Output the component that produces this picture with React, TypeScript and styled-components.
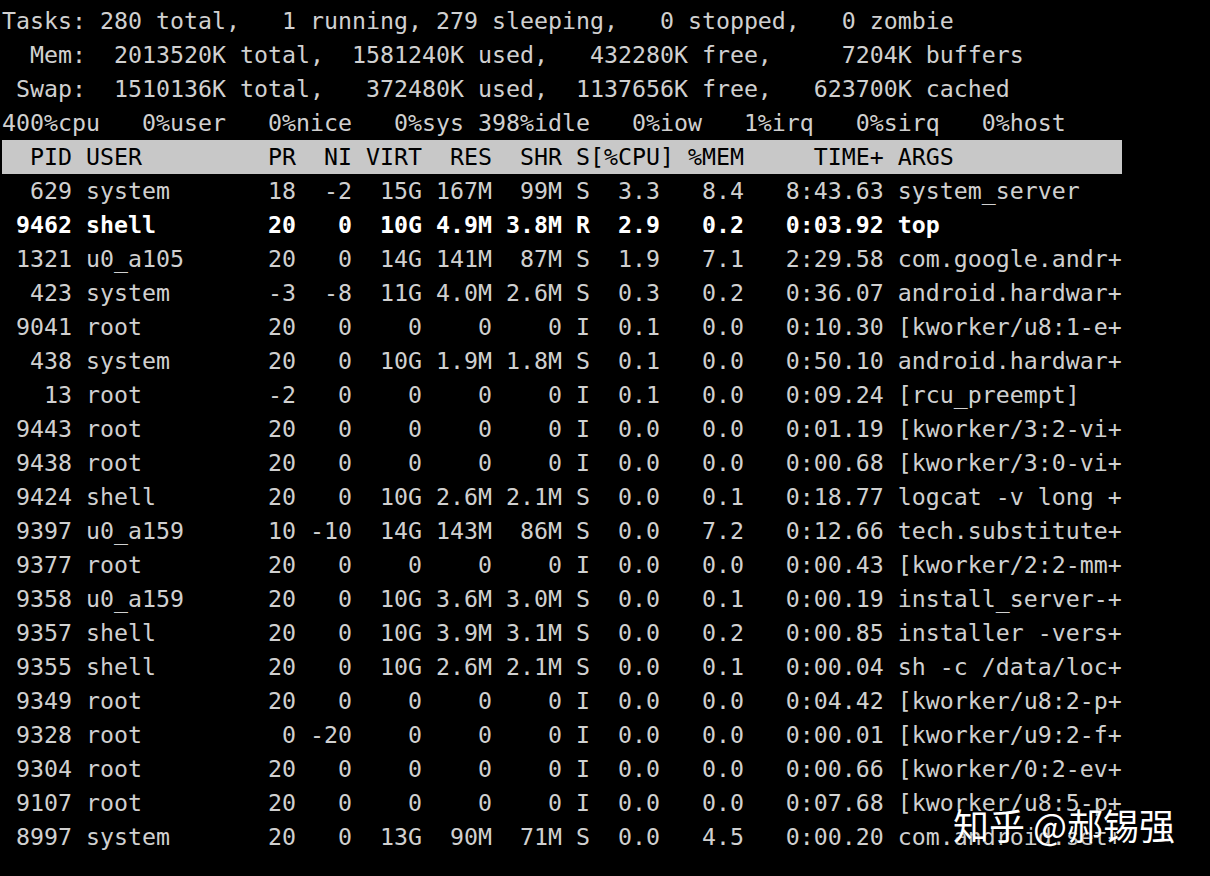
import React from "react";
import styled, { createGlobalStyle } from "styled-components";

const GlobalStyle = createGlobalStyle`
  html, body {
    margin: 0;
    padding: 0;
    background: #000;
    overflow: hidden;
  }
  #root {
    width: 1210px;
    height: 876px;
  }
`;

const Screen = styled.div`
  position: relative;
  width: 1210px;
  height: 876px;
  box-sizing: border-box;
  padding: 4px 0 0 2px;
  background: #000;
  overflow: hidden;
  font-family: "DejaVu Sans Mono", "Liberation Mono", monospace;
  font-size: 23.26px;
  line-height: 34px;
  color: #d0d0d0;
`;

const Line = styled.div`
  white-space: pre;
  height: 34px;
`;

const HeaderLine = styled(Line)`
  width: 80ch;
  background: #c8c8c8;
  color: #000;
`;

const ProcessRow = styled(Line)<{ $active?: boolean }>`
  color: ${(p) => (p.$active ? "#ffffff" : "#d0d0d0")};
  font-weight: ${(p) => (p.$active ? 700 : 400)};
`;

const Watermark = styled.div`
  position: absolute;
  left: 953px;
  top: 802px;
  font-family: "Noto Sans CJK SC", "Noto Sans", sans-serif;
  font-size: 36px;
  line-height: 44px;
  color: #ffffff;
  white-space: pre;
  text-shadow: 0 0 2px rgba(0, 0, 0, 0.6);
`;

type Proc = {
  pid: string;
  user: string;
  pr: string;
  ni: string;
  virt: string;
  res: string;
  shr: string;
  s: string;
  cpu: string;
  mem: string;
  time: string;
  args: string;
  active?: boolean;
};

const procs: Proc[] = [
  { pid: "629", user: "system", pr: "18", ni: "-2", virt: "15G", res: "167M", shr: "99M", s: "S", cpu: "3.3", mem: "8.4", time: "8:43.63", args: "system_server" },
  { pid: "9462", user: "shell", pr: "20", ni: "0", virt: "10G", res: "4.9M", shr: "3.8M", s: "R", cpu: "2.9", mem: "0.2", time: "0:03.92", args: "top", active: true },
  { pid: "1321", user: "u0_a105", pr: "20", ni: "0", virt: "14G", res: "141M", shr: "87M", s: "S", cpu: "1.9", mem: "7.1", time: "2:29.58", args: "com.google.andr+" },
  { pid: "423", user: "system", pr: "-3", ni: "-8", virt: "11G", res: "4.0M", shr: "2.6M", s: "S", cpu: "0.3", mem: "0.2", time: "0:36.07", args: "android.hardwar+" },
  { pid: "9041", user: "root", pr: "20", ni: "0", virt: "0", res: "0", shr: "0", s: "I", cpu: "0.1", mem: "0.0", time: "0:10.30", args: "[kworker/u8:1-e+" },
  { pid: "438", user: "system", pr: "20", ni: "0", virt: "10G", res: "1.9M", shr: "1.8M", s: "S", cpu: "0.1", mem: "0.0", time: "0:50.10", args: "android.hardwar+" },
  { pid: "13", user: "root", pr: "-2", ni: "0", virt: "0", res: "0", shr: "0", s: "I", cpu: "0.1", mem: "0.0", time: "0:09.24", args: "[rcu_preempt]" },
  { pid: "9443", user: "root", pr: "20", ni: "0", virt: "0", res: "0", shr: "0", s: "I", cpu: "0.0", mem: "0.0", time: "0:01.19", args: "[kworker/3:2-vi+" },
  { pid: "9438", user: "root", pr: "20", ni: "0", virt: "0", res: "0", shr: "0", s: "I", cpu: "0.0", mem: "0.0", time: "0:00.68", args: "[kworker/3:0-vi+" },
  { pid: "9424", user: "shell", pr: "20", ni: "0", virt: "10G", res: "2.6M", shr: "2.1M", s: "S", cpu: "0.0", mem: "0.1", time: "0:18.77", args: "logcat -v long +" },
  { pid: "9397", user: "u0_a159", pr: "10", ni: "-10", virt: "14G", res: "143M", shr: "86M", s: "S", cpu: "0.0", mem: "7.2", time: "0:12.66", args: "tech.substitute+" },
  { pid: "9377", user: "root", pr: "20", ni: "0", virt: "0", res: "0", shr: "0", s: "I", cpu: "0.0", mem: "0.0", time: "0:00.43", args: "[kworker/2:2-mm+" },
  { pid: "9358", user: "u0_a159", pr: "20", ni: "0", virt: "10G", res: "3.6M", shr: "3.0M", s: "S", cpu: "0.0", mem: "0.1", time: "0:00.19", args: "install_server-+" },
  { pid: "9357", user: "shell", pr: "20", ni: "0", virt: "10G", res: "3.9M", shr: "3.1M", s: "S", cpu: "0.0", mem: "0.2", time: "0:00.85", args: "installer -vers+" },
  { pid: "9355", user: "shell", pr: "20", ni: "0", virt: "10G", res: "2.6M", shr: "2.1M", s: "S", cpu: "0.0", mem: "0.1", time: "0:00.04", args: "sh -c /data/loc+" },
  { pid: "9349", user: "root", pr: "20", ni: "0", virt: "0", res: "0", shr: "0", s: "I", cpu: "0.0", mem: "0.0", time: "0:04.42", args: "[kworker/u8:2-p+" },
  { pid: "9328", user: "root", pr: "0", ni: "-20", virt: "0", res: "0", shr: "0", s: "I", cpu: "0.0", mem: "0.0", time: "0:00.01", args: "[kworker/u9:2-f+" },
  { pid: "9304", user: "root", pr: "20", ni: "0", virt: "0", res: "0", shr: "0", s: "I", cpu: "0.0", mem: "0.0", time: "0:00.66", args: "[kworker/0:2-ev+" },
  { pid: "9107", user: "root", pr: "20", ni: "0", virt: "0", res: "0", shr: "0", s: "I", cpu: "0.0", mem: "0.0", time: "0:07.68", args: "[kworker/u8:5-p+" },
  { pid: "8997", user: "system", pr: "20", ni: "0", virt: "13G", res: "90M", shr: "71M", s: "S", cpu: "0.0", mem: "4.5", time: "0:00.20", args: "com.android.set+" },
];

const formatRow = (p: Proc) =>
  p.pid.padStart(5) +
  " " +
  p.user.padEnd(12) +
  " " +
  p.pr.padStart(2) +
  p.ni.padStart(4) +
  p.virt.padStart(5) +
  p.res.padStart(5) +
  p.shr.padStart(5) +
  " " +
  p.s +
  p.cpu.padStart(5) +
  p.mem.padStart(6) +
  p.time.padStart(10) +
  " " +
  p.args;

const summary = [
  "Tasks: 280 total,   1 running, 279 sleeping,   0 stopped,   0 zombie",
  "  Mem:  2013520K total,  1581240K used,   432280K free,     7204K buffers",
  " Swap:  1510136K total,   372480K used,  1137656K free,   623700K cached",
  "400%cpu   0%user   0%nice   0%sys 398%idle   0%iow   1%irq   0%sirq   0%host",
];

const header =
  "  PID USER         PR  NI VIRT  RES  SHR S[%CPU] %MEM     TIME+ ARGS";

export default function App() {
  return (
    <>
      <GlobalStyle />
      <Screen>
        {summary.map((l, i) => (
          <Line key={i}>{l}</Line>
        ))}
        <HeaderLine>{header}</HeaderLine>
        {procs.map((p) => (
          <ProcessRow key={p.pid} $active={p.active}>
            {formatRow(p)}
          </ProcessRow>
        ))}
        <Watermark>知乎 @郝锡强</Watermark>
      </Screen>
    </>
  );
}
